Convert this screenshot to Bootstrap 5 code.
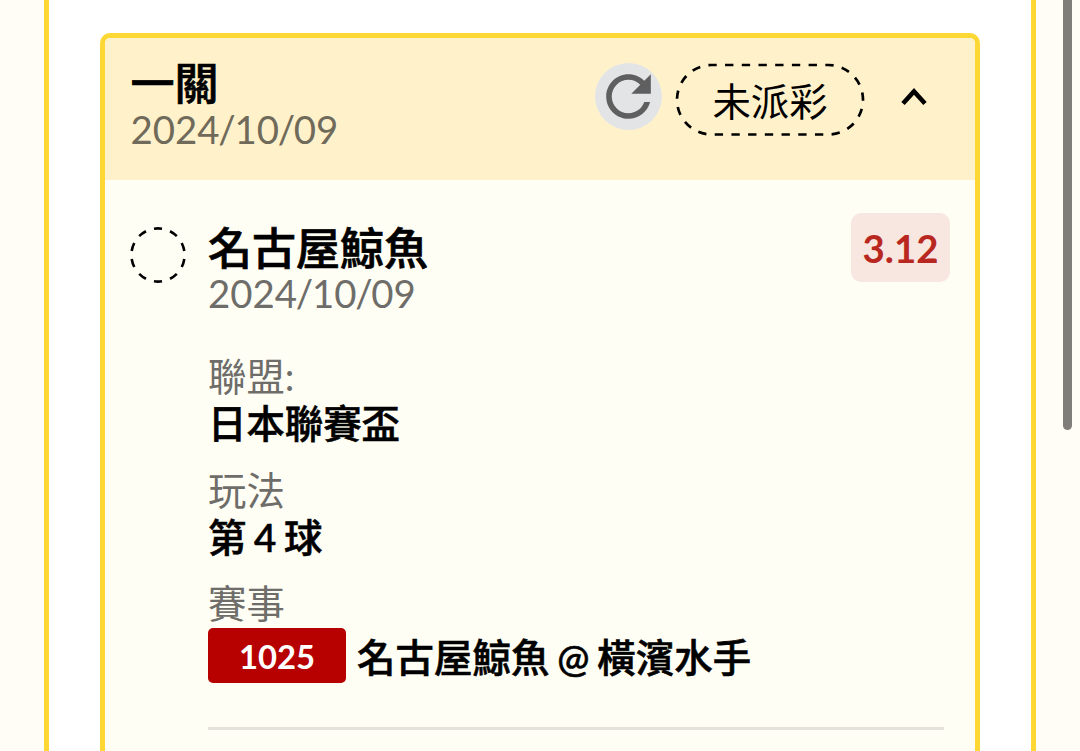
<!DOCTYPE html>
<html lang="zh-Hant">
<head>
  <meta charset="UTF-8" />
  <meta name="viewport" content="width=device-width, initial-scale=1.0" />
  <title>一關</title>
  <link href="https://cdn.jsdelivr.net/npm/bootstrap@5.3.3/dist/css/bootstrap.min.css" rel="stylesheet">
  <style>
    body {
      background: #fffdf5;
      color: #000;
      font-family: Lato, "Noto Sans CJK TC", sans-serif;
      font-size: 38.4px;
      height: 751px;
      overflow: hidden;
    }
    .panel {
      width: 992px;
      height: 751px;
      margin-left: 44px;
      padding: 33px 51px 0;
      border: solid #fdd835;
      border-width: 0 5px;
    }
    .ticket {
      height: 740px;
      border: 5px solid #fdd835;
      border-radius: 10px;
      background: #fffef5;
      overflow: hidden;
    }
    .ticket-head {
      height: 142px;
      padding: 21px 47px 0 25.5px;
      background: #fff2cb;
    }
    .title-line {
      font-size: 44px;
      line-height: 48px;
      font-weight: 500;
      -webkit-text-stroke: .7px #000;
    }
    .date-line {
      line-height: 44px;
      color: #706a5a;
    }
    .date-line span { margin: 0 -1.25px; }
    .ticket-body .date-line { line-height: 42px; color: #6e6d69; }
    .refresh-btn {
      width: 67px;
      height: 67px;
      background: #e3e4e6;
      margin: 4px 13px 0 0;
    }
    .status-pill {
      width: 190px;
      height: 74px;
      line-height: 79px;
      margin: 3px 35px 0 0;
    }
    .ticket-body { padding: 33px 25px 0 24px; }
    .state-ring { width: 58px; height: 58px; margin: 12.5px 21px 0 0; }
    .bet-name { padding-top: 11px; }
    .odds {
      width: 99px;
      height: 69px;
      line-height: 71px;
      border-radius: 10px;
      background: #f7e7e0;
      color: #b92820;
    }
    .detail { margin-top: 39px; }
    .detail dt {
      font-weight: 400;
      line-height: 47px;
      color: #6e6d69;
    }
    .detail dd {
      line-height: 47.5px;
      font-weight: 500;
      -webkit-text-stroke: .6px #000;
      word-spacing: -2px;
      margin: 0 0 19px;
    }
    .detail .match-row {
      padding-top: 1px;
      margin-bottom: 44px;
    }
    .match-teams {
      padding-top: 5px;
      letter-spacing: .1px;
    }
    .match-no {
      width: 138px;
      height: 55px;
      line-height: 57px;
      margin-right: 11px;
      font-size: 32.8px;
      font-weight: 700;
      -webkit-text-stroke: 0;
      border-radius: 5px;
      background: #b70000;
      color: #fff;
    }
    .divider {
      height: 3px;
      margin-right: 6px;
      background: #e5e2db;
    }
    .scroll-thumb {
      right: 8px;
      top: -10px;
      width: 9px;
      height: 440px;
      border-radius: 5px;
      background: #7f7e7a;
    }
  </style>
</head>
<body>

  <div class="panel bg-white">
    <div class="ticket">

      <!-- Ticket header -->
      <div class="ticket-head d-flex align-items-start">
        <div class="me-auto">
          <div class="title-line">一關</div>
          <div class="date-line">2024<span>/</span>10<span>/</span>09</div>
        </div>
        <button class="refresh-btn btn border-0 rounded-circle p-0 d-flex" type="button" aria-label="refresh">
          <svg width="67" height="67" viewBox="0 0 24 24" fill="#5f5f60"><path d="M17.65 6.35C16.2 4.9 14.21 4 12 4c-4.42 0-7.99 3.58-7.99 8s3.57 8 7.99 8c3.73 0 6.84-2.55 7.73-6h-2.08c-.82 2.33-3.04 4-5.65 4-3.31 0-6-2.69-6-6s2.69-6 6-6c1.66 0 3.14.69 4.22 1.78L13 11h7V4l-2.35 2.35z"/></svg>
        </button>
        <div class="status-pill position-relative text-center">
          <svg class="position-absolute top-0 start-0" width="190" height="74" fill="none" stroke="#000" stroke-width="2.7">
            <rect x="2" y="3" width="186" height="69.5" rx="34.7" pathLength="54" stroke-dasharray="1 1" stroke-dashoffset=".4"/>
          </svg>
          未派彩
        </div>
        <svg class="mt-4" width="28" height="25" fill="none" stroke="#000" stroke-width="4.6"><path d="M3 20.5 14 8.5l11 12"/></svg>
      </div>

      <!-- Bet -->
      <div class="ticket-body d-flex align-items-start">
        <svg class="state-ring flex-shrink-0" viewBox="0 0 58 58" fill="none" stroke="#000" stroke-width="2.6">
          <circle cx="29" cy="29" r="26.6" pathLength="20" stroke-dasharray="1 1" stroke-dashoffset=".5" transform="rotate(-90 29 29)"/>
        </svg>
        <div class="flex-grow-1">
          <div class="d-flex align-items-start justify-content-between">
            <div class="bet-name">
              <div class="title-line">名古屋鯨魚</div>
              <div class="date-line">2024<span>/</span>10<span>/</span>09</div>
            </div>
            <div class="odds text-center fw-bold">3.12</div>
          </div>
          <dl class="detail mb-0">
            <dt>聯盟:</dt>
            <dd>日本聯賽盃</dd>
            <dt>玩法</dt>
            <dd>第 4 球</dd>
            <dt>賽事</dt>
            <dd class="match-row d-flex align-items-center">
              <span class="match-no text-center">1025</span>
              <span class="match-teams">名古屋鯨魚 @ 橫濱水手</span>
            </dd>
          </dl>
          <div class="divider"></div>
        </div>
      </div>

    </div>
  </div>

  <div class="scroll-thumb position-absolute"></div>

  <script src="https://cdn.jsdelivr.net/npm/bootstrap@5.3.3/dist/js/bootstrap.bundle.min.js"></script>
</body>
</html>
